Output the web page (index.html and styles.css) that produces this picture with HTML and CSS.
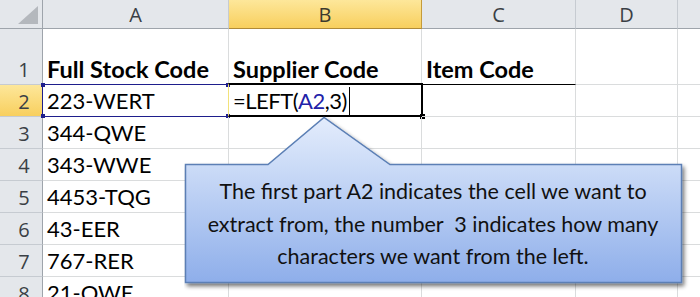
FILE: index.html
```html
<!DOCTYPE html>
<html lang="en">
<head>
  <meta charset="UTF-8">
  <title>LEFT function</title>
  <link rel="stylesheet" href="styles.css">
</head>
<body>
  <div class="sheet">
    <div class="grid">
      <div class="corner"><svg width="24" height="18" viewBox="0 0 24 18"><polygon points="24,0 24,18 4,18" fill="#b4b8bd"/></svg></div>
      <div class="col-head">A</div>
      <div class="col-head sel">B</div>
      <div class="col-head">C</div>
      <div class="col-head">D</div>
      <div class="col-head last"></div>

      <div class="row-head tall">1</div>
      <div class="cell tall bold">Full Stock Code</div>
      <div class="cell tall bold">Supplier Code</div>
      <div class="cell tall bold under">Item Code</div>
      <div class="cell tall"></div>
      <div class="cell tall"></div>

      <div class="row-head sel">2</div>
      <div class="cell ref">223-WERT<i class="dot tl"></i><i class="dot tr"></i><i class="dot bl"></i><i class="dot br"></i></div>
      <div class="cell active"><span class="formula">=LEFT(<span class="ref-text">A2</span>,3)</span><span class="caret"></span></div>
      <div class="cell"></div>
      <div class="cell"></div>
      <div class="cell"></div>

      <div class="row-head">3</div>
      <div class="cell">344-QWE</div>
      <div class="cell"></div><div class="cell"></div><div class="cell"></div><div class="cell"></div>

      <div class="row-head">4</div>
      <div class="cell">343-WWE</div>
      <div class="cell"></div><div class="cell"></div><div class="cell"></div><div class="cell"></div>

      <div class="row-head">5</div>
      <div class="cell">4453-TQG</div>
      <div class="cell"></div><div class="cell"></div><div class="cell"></div><div class="cell"></div>

      <div class="row-head">6</div>
      <div class="cell">43-EER</div>
      <div class="cell"></div><div class="cell"></div><div class="cell"></div><div class="cell"></div>

      <div class="row-head">7</div>
      <div class="cell">767-RER</div>
      <div class="cell"></div><div class="cell"></div><div class="cell"></div><div class="cell"></div>

      <div class="row-head">8</div>
      <div class="cell">21-QWE</div>
      <div class="cell"></div><div class="cell"></div><div class="cell"></div><div class="cell"></div>
    </div>

    <!-- speech bubble pointing at B2 -->
    <div class="callout">
      <svg class="bubble" width="520" height="185" viewBox="0 0 520 185">
        <defs>
          <linearGradient id="fill" x1="0" y1="0" x2="0" y2="1">
            <stop offset="0" stop-color="#e3ecfc"/>
            <stop offset="0.3" stop-color="#cbdbf7"/>
            <stop offset="1" stop-color="#8eaeea"/>
          </linearGradient>
          <filter id="shadow" x="-5%" y="-5%" width="115%" height="120%">
            <feGaussianBlur in="SourceAlpha" stdDeviation="2"/>
            <feOffset dx="2" dy="3"/>
            <feComponentTransfer><feFuncA type="linear" slope="0.55"/></feComponentTransfer>
            <feMerge><feMergeNode/><feMergeNode in="SourceGraphic"/></feMerge>
          </filter>
        </defs>
        <path d="M1.5,48.5 H84 L140,1.5 L206,48.5 H497.5 V166.5 H1.5 Z" fill="url(#fill)" stroke="#5b7fb5" stroke-width="1.5" filter="url(#shadow)"/>
      </svg>
      <p class="note">The first part A2 indicates the cell we want to<br>extract from, the number&nbsp; 3 indicates how many<br>characters we want from the left.</p>
    </div>
  </div>
</body>
</html>
```

FILE: styles.css
```css
* { box-sizing: border-box; }
body {
  margin: 0;
  background: #fff;
  font-family: Lato, "Open Sans", sans-serif;
  color: #000;
  overflow: hidden;
}
.sheet {
  position: relative;
  width: 700px; height: 297px;
  overflow: hidden;
}
.grid {
  display: grid;
  grid-template-columns: 43px 186px 193px 154px 102px 30px;
  grid-template-rows: 29px 56px repeat(7, 32px);
}

/* headers */
.corner, .col-head, .row-head {
  background: #e4e7eb;
  color: #3a3f45;
  font-family: "Open Sans", sans-serif;
  font-size: 20px;
}
.corner {
  display: flex; align-items: flex-end; justify-content: flex-end;
  padding: 0 4px 4px 0;
  border-right: 1px solid #9ea4ab;
  border-bottom: 1px solid #9ea4ab;
}
.col-head {
  display: flex; align-items: center; justify-content: center;
  border-right: 1px solid #c6cbd1;
  border-bottom: 1px solid #9ea4ab;
  padding-top: 1px;
}
.col-head.sel {
  background: linear-gradient(#fde79a, #f8cf5e);
  border-right-color: #c59b3a;
  border-bottom-color: #b08a38;
  color: #3d3a2e;
}
.row-head {
  display: flex; align-items: flex-end; justify-content: center;
  border-right: 1px solid #9ea4ab;
  border-bottom: 1px solid #c6cbd1;
  padding: 0 0 1px 6px;
}
.row-head.sel {
  background: linear-gradient(#fde79a, #f8cf5e);
  border-right-color: #b08a38;
}

/* cells */
.cell {
  position: relative;
  display: flex; align-items: flex-end;
  padding: 0 0 2px 4px;
  border-right: 1px solid #dadcdd;
  border-bottom: 1px solid #dadcdd;
  font-size: 22px;
  white-space: nowrap;
}
.bold { font-weight: 700; font-size: 23.5px; padding-bottom: 1px; }
.under { border-bottom-color: #000; }

/* referenced range A2 */
.cell.ref { border-bottom-color: #1e1e8c; }
.cell.ref::before {
  content: "";
  position: absolute; left: -1px; top: -1px; right: -1px; bottom: -1px;
  border: 1px solid #1e1e8c;
}
.dot {
  position: absolute;
  width: 4px; height: 4px;
  background: #1e1e8c;
}
.dot.tl { left: -2px; top: -2px; }
.dot.tr { right: -2px; top: -2px; }
.dot.bl { left: -2px; bottom: -2px; }
.dot.br { right: -2px; bottom: -2px; }

/* active cell B2 */
.cell.active::before {
  content: "";
  position: absolute; left: -1px; top: -2px; right: -2px; bottom: -1px;
  border: 2px solid #000;
  border-left: 1px solid #f2e27a;
}
.cell.active::after {
  content: "";
  position: absolute; right: -4px; bottom: -3px;
  width: 5px; height: 5px;
  background: #000;
}
.formula { letter-spacing: -0.5px; }
.ref-text { color: #2121a8; }
.caret {
  display: inline-block;
  width: 1px; height: 29px;
  margin-left: 2px; margin-bottom: -2px;
  background: #000;
}

.callout {
  position: absolute;
  left: 184px; top: 116px;
  width: 520px; height: 185px;
}
.bubble { position: absolute; left: 0; top: 0; }
.note {
  position: relative;
  margin: 0;
  width: 498px;
  padding-top: 59px;
  text-align: center;
  white-space: nowrap;
  font-size: 21.5px;
  line-height: 32.5px;
  color: #111;
}
```
